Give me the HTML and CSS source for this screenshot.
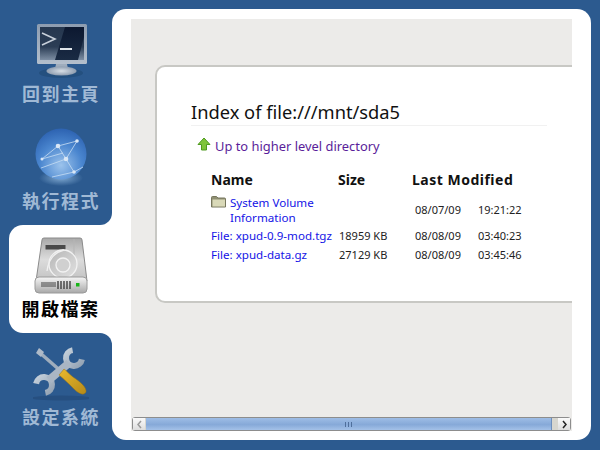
FILE: index.html
```html
<!DOCTYPE html>
<html lang="zh-Hant">
<head>
<meta charset="utf-8">
<title>xPUD</title>
<link rel="stylesheet" href="styles.css">
</head>
<body>
<div class="app">
  <nav class="sidebar">
    <div class="tab">
      <div class="tab-inner tab-home">
        <svg class="icon" width="56" height="56" viewBox="0 0 56 56">
          <defs>
            <linearGradient id="scr" x1="0" y1="0" x2="0" y2="1"><stop offset="0" stop-color="#26374f"/><stop offset=".6" stop-color="#2b3d55"/><stop offset="1" stop-color="#7d8ea3"/></linearGradient>
            <linearGradient id="slant" x1="0" y1="0" x2="0" y2="1"><stop offset="0" stop-color="#0c1830"/><stop offset="1" stop-color="#1a2b44"/></linearGradient>
            <linearGradient id="frm" x1="0" y1="0" x2="0" y2="1"><stop offset="0" stop-color="#8d9cb0"/><stop offset="1" stop-color="#b4bfcc"/></linearGradient>
            <radialGradient id="base"><stop offset="0" stop-color="#d8dfe6"/><stop offset="1" stop-color="#8e9db0"/></radialGradient>
          </defs>
          <ellipse cx="28" cy="49" rx="22" ry="5" fill="#24507f"/>
          <rect x="4" y="0" width="50" height="40" rx="1.5" fill="url(#frm)"/>
          <rect x="7" y="3" width="44" height="33" fill="url(#scr)"/>
          <path d="M32 3h19v10l-6 23H22z" fill="url(#slant)"/>
          <path d="M9 9l13 6-13 6" fill="none" stroke="#c8d0da" stroke-width="1.6"/>
          <path d="M27 25h12" stroke="#dfe4ea" stroke-width="2"/>
          <path d="M23 40h11l1 5H22z" fill="#9fadbd"/>
          <ellipse cx="28.500" cy="47" rx="15" ry="4.500" fill="url(#base)"/>
        </svg>
        <span class="label">回到主頁</span>
      </div>
    </div>
    <div class="tab tab-white-back">
      <div class="tab-inner tab-run">
        <svg class="icon" width="56" height="60" viewBox="0 0 56 60">
          <defs>
            <radialGradient id="glb" cx=".5" cy=".72" r=".75"><stop offset="0" stop-color="#9cc3ec"/><stop offset=".55" stop-color="#4a86cf"/><stop offset="1" stop-color="#2a5fae"/></radialGradient>
            <radialGradient id="glow"><stop offset="0" stop-color="#7fa8d0"/><stop offset="1" stop-color="#2c5a8f"/></radialGradient>
          </defs>
          <ellipse cx="28" cy="51" rx="22" ry="8" fill="url(#glow)"/>
          <circle cx="28" cy="27" r="25.500" fill="url(#glb)"/>
          <g stroke="#c6dcf3" stroke-width=".9" fill="none" opacity=".9">
            <path d="M25 19L44 14M25 19L33 32M33 32L44 14M33 32L8 41M33 32L41 45M41 45L19 50M25 19L9 32M9 32L30 26M41 45L50 40"/>
          </g>
          <g fill="#d9e7f6">
            <circle cx="25" cy="19" r="2.300"/><circle cx="44" cy="14" r="1.800"/><circle cx="33" cy="32" r="2.300"/><circle cx="41" cy="45" r="1.800"/><circle cx="9" cy="32" r="1.500"/>
          </g>
        </svg>
        <span class="label">執行程式</span>
      </div>
    </div>
    <div class="tab-selected">
      <svg class="icon" width="56" height="58" viewBox="0 0 56 58">
        <defs>
          <linearGradient id="dsk" x1="0" y1="0" x2="0" y2="1"><stop offset="0" stop-color="#a9a9a9"/><stop offset=".5" stop-color="#dcdcdc"/><stop offset="1" stop-color="#c2c2c2"/></linearGradient>
          <linearGradient id="frt" x1="0" y1="0" x2="0" y2="1"><stop offset="0" stop-color="#f6f6f6"/><stop offset="1" stop-color="#a8a8a8"/></linearGradient>
          <linearGradient id="plt" x1="0" y1="0" x2="1" y2="1"><stop offset="0" stop-color="#b5b5b5"/><stop offset="1" stop-color="#e2e2e2"/></linearGradient>
        </defs>
        <path d="M9 3a2 2 0 012-2h36a2 2 0 012 2l5 41H3z" fill="url(#dsk)" stroke="#8a8a8a"/>
        <rect x="12.500" y="8" width="20" height="4.500" fill="#4a4a4a"/>
        <path d="M41 2v17" stroke="#b5b5b5"/>
        <circle cx="30" cy="27" r="14" fill="url(#plt)" stroke="#f2f2f2" stroke-width="1.300"/>
        <circle cx="30" cy="28" r="7" fill="#d0d0d0" stroke="#f2f2f2" stroke-width="1.300"/>
        <path d="M14 34c1-8 5-18 17-21" fill="none" stroke="#f0f0f0" stroke-width="1.300"/>
        <rect x="2" y="40" width="52" height="16" rx="4" fill="url(#frt)" stroke="#9a9a9a"/>
        <rect x="8" y="45" width="15" height="5" fill="#5a5a5a" opacity=".6"/>
        <path d="M25 44v8M28 44v8M31 44v8M34 44v8M37 44v8" stroke="#4a4a4a" stroke-width="1.500"/>
        <rect x="43" y="46" width="3.500" height="3.500" fill="#19b519"/>
      </svg>
      <span class="label label-active">開啟檔案</span>
    </div>
    <div class="tab tab-white-back">
      <div class="tab-inner tab-set">
        <svg class="icon" width="56" height="58" viewBox="0 0 56 58">
          <defs>
            <linearGradient id="wr" x1="0" y1="0" x2="1" y2="1"><stop offset="0" stop-color="#c4cfda"/><stop offset="1" stop-color="#93a2b3"/></linearGradient>
            <linearGradient id="hnd" x1="0" y1="0" x2="1" y2="1"><stop offset="0" stop-color="#e9b92e"/><stop offset="1" stop-color="#b68a18"/></linearGradient>
          </defs>
          <ellipse cx="28" cy="53" rx="30" ry="2.500" fill="#264f80"/>
          <path d="M6 7L30 28" stroke="#9fadbc" stroke-width="3.500"/>
          <path d="M3 8l3-5 5 4-3 5z" fill="#aebac8"/>
          <path d="M39.600 5.100A8 8 0 1 0 48.900 14.400" fill="none" stroke="url(#wr)" stroke-width="6"/>
          <path d="M3.100 38.600A8 8 0 1 1 12.400 47.900" fill="none" stroke="url(#wr)" stroke-width="6"/>
          <path d="M36 18L16 35" stroke="#aab6c4" stroke-width="8"/>
          <path d="M26 30l5-6c3 2 5 5 9 8 8 5 14 11 13 15-2 4-7 2-12-3-5-5-10-10-15-14z" fill="url(#hnd)" stroke="#94701a" stroke-width=".5"/>
        </svg>
        <span class="label">設定系統</span>
      </div>
    </div>
  </nav>
  <main class="panel">
    <div class="view">
      <div class="canvas">
        <section class="card">
          <h1 class="title">Index of file:///mnt/sda5</h1>
          <a class="up" href="#">
            <svg width="14" height="15" viewBox="0 0 14 15"><path d="M7 1l6 6.500H9.500V13h-5V7.500H1z" fill="#7fc43a" stroke="#4f9a20"/></svg>
            <span>Up to higher level directory</span>
          </a>
          <table class="files">
            <colgroup>
              <col class="col-name"><col class="col-size"><col class="col-date"><col class="col-time">
            </colgroup>
            <thead>
              <tr><th>Name</th><th>Size</th><th class="c-mod" colspan="2">Last Modified</th></tr>
            </thead>
            <tbody>
              <tr class="row-dir">
                <td class="c-name">
                  <div class="dir">
                    <svg width="15" height="13" viewBox="0 0 15 13"><path d="M.5 2.500a1 1 0 011-1h4l1.500 1.500h6.500a1 1 0 011 1V12H.5z" fill="#8f8f72" stroke="#77775e"/><rect x="1.500" y="4.500" width="12.500" height="7" fill="#d9d9b8"/></svg>
                    <a href="#">System Volume Information</a>
                  </div>
                </td>
                <td class="c-size"></td>
                <td class="c-date">08/07/09</td>
                <td>19:21:22</td>
              </tr>
              <tr>
                <td class="c-name"><a href="#">File: xpud-0.9-mod.tgz</a></td>
                <td class="c-size">18959 KB</td>
                <td class="c-date">08/08/09</td>
                <td>03:40:23</td>
              </tr>
              <tr>
                <td class="c-name"><a href="#">File: xpud-data.gz</a></td>
                <td class="c-size">27129 KB</td>
                <td class="c-date">08/08/09</td>
                <td>03:45:46</td>
              </tr>
            </tbody>
          </table>
        </section>
      </div>
      <div class="scrollbar">
        <div class="sb-btn"><svg width="7" height="9" viewBox="0 0 7 9"><path d="M5 1L2 4.500 5 8" fill="none" stroke="#9a9a9a" stroke-width="1.500"/></svg></div>
        <div class="sb-track">
          <div class="sb-thumb"><span class="sb-grip"></span></div>
        </div>
        <div class="sb-btn"><svg width="7" height="9" viewBox="0 0 7 9"><path d="M2 1l3 3.500L2 8" fill="none" stroke="#222" stroke-width="1.500"/></svg></div>
      </div>
    </div>
  </main>
</div>
</body>
</html>
```
FILE: styles.css
```css
* { box-sizing: border-box; }
html, body { margin: 0; height: 100%; }
body { background: #2c5a8f; overflow: hidden; font-family: "Noto Sans", "Open Sans", sans-serif; }
.app { display: flex; width: 600px; height: 450px; }

.sidebar { width: 112px; flex: none; display: flex; flex-direction: column; background: #2c5a8f; }
.tab { background: #2c5a8f; }
.tab-white-back { background: #fff; }
.tab-inner { display: flex; flex-direction: column; align-items: center; background: #2c5a8f; padding-left: 10px; }
.tab-home { height: 117px; padding-top: 24px; }
.tab-run { height: 108px; padding-top: 10px; border-bottom-right-radius: 12px; }
.tab-selected { height: 108px; margin-left: 9px; padding-top: 12px; display: flex; flex-direction: column; align-items: center; background: #fff; border-radius: 14px 0 0 14px; }
.tab-set { height: 117px; padding-top: 12px; border-top-right-radius: 12px; }
.icon { display: block; flex: none; }
.label { margin-top: 2px; font: 700 18px/22px "Noto Sans CJK TC", "Noto Sans", sans-serif; letter-spacing: 1.500px; color: #a0b9d5; white-space: nowrap; }
.label-active { color: #000; }

.panel { flex: 1; margin: 9px 9px 10px 0; padding: 10px 19px 9px; background: #fff; border-radius: 14px; display: flex; min-width: 0; }
.view { flex: 1; min-width: 0; display: flex; flex-direction: column; background: #ecebe9; }
.canvas { flex: 1; overflow: hidden; padding: 46px 0 0 24px; }

.card { width: 520px; height: 238px; background: #fff; border: 2px solid #c8c8c4; border-radius: 10px; padding: 33px 0 0 34px; }
.title { margin: 0; width: 356px; padding-bottom: 1px; font-size: 18.300px; line-height: 24px; font-weight: 400; color: #111; border-bottom: 1px solid #f1f1f1; white-space: nowrap; }
.up { display: flex; align-items: center; gap: 4px; margin: 11px 0 0 6px; font-size: 12.900px; line-height: 18px; color: #5a1e9a; text-decoration: none; white-space: nowrap; }
.up svg { margin-top: -4px; }

.files { margin: 14.500px 0 0 20px; border-collapse: collapse; table-layout: fixed; width: 340px; font-size: 11px; color: #222; }
.col-name { width: 127px; }
.col-size { width: 74px; }
.col-date { width: 66px; }
.col-time { width: 73px; }
.files a { color: #1414e6; text-decoration: none; }
.files th { padding: 0 0 3px; font-size: 14px; line-height: 20px; font-weight: 700; text-align: left; color: #111; }
.files td { padding: 1px 0; line-height: 17px; vertical-align: middle; white-space: nowrap; }
.files td.c-name { font-size: 11.600px; }
.files td.c-size { padding-left: 1px; }
.files td.c-date { padding-left: 3px; }
.files th.c-mod { letter-spacing: .5px; }
.dir { display: flex; align-items: flex-start; gap: 4px; }
.dir svg { flex: none; }
.dir a { white-space: normal; width: 100px; line-height: 15px; }
.files .row-dir td { padding-top: 2px; padding-bottom: 1px; }

.scrollbar { flex: none; height: 14px; margin: 0 1px; display: flex; border: 1px solid #8d8d8d; border-radius: 3px; background: #d7d6cf; }
.sb-btn { width: 12px; flex: none; display: flex; align-items: center; justify-content: center; background: linear-gradient(#fafafa, #dddddd); }
.sb-track { flex: 1; padding: 0 6px 0 1px; min-width: 0; display: flex; }
.sb-thumb { flex: 1; display: flex; align-items: center; justify-content: center; background: linear-gradient(#9ebde6, #86a9d8 55%, #a4c1e8); border-right: 1px solid #6e8fbd; }
.sb-grip { width: 7px; height: 5px; background: repeating-linear-gradient(90deg, #4f6f9c 0 1px, transparent 1px 3px); }
```
